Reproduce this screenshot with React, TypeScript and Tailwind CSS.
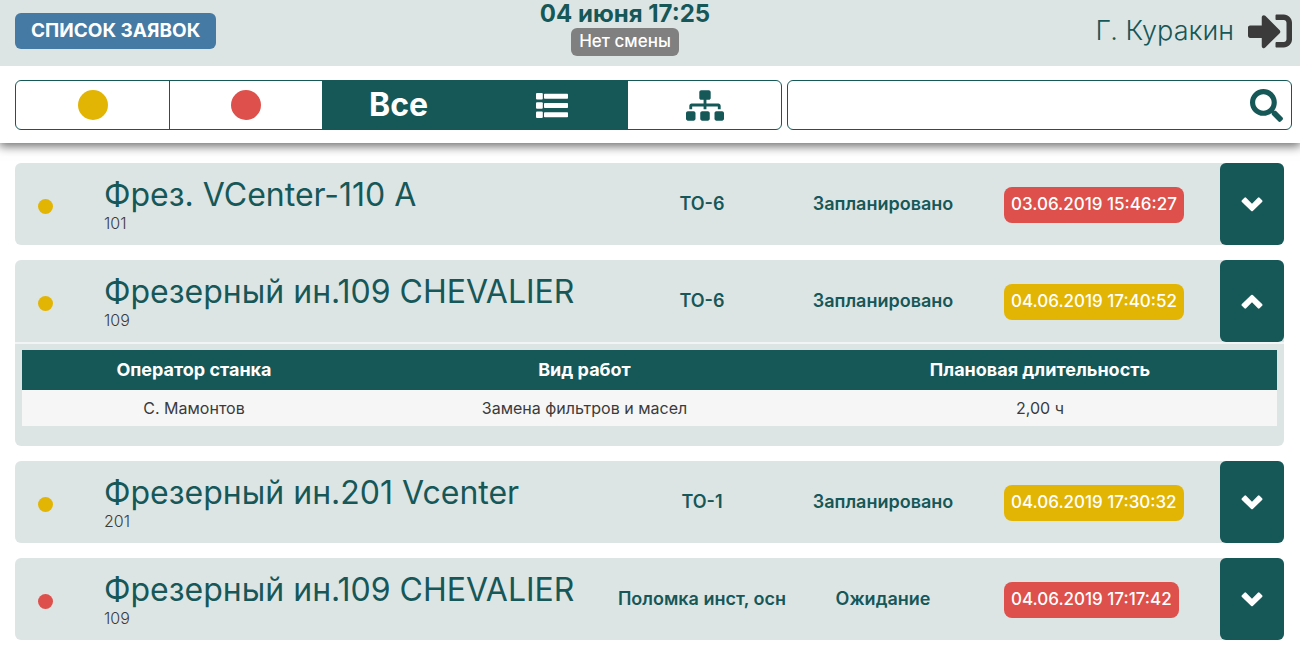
import { useState } from "react";
import { FaSearch, FaSignInAlt, FaSitemap } from "react-icons/fa";

interface Work {
  operator: string;
  kind: string;
  duration: string;
}

interface Request {
  id: number;
  level: "warning" | "danger";
  overdue: boolean;
  machine: string;
  number: string;
  type: string;
  status: string;
  date: string;
  works: Work[];
}

const requests: Request[] = [
  {
    id: 1,
    level: "warning",
    overdue: true,
    machine: "Фрез. VCenter-110 А",
    number: "101",
    type: "ТО-6",
    status: "Запланировано",
    date: "03.06.2019 15:46:27",
    works: [],
  },
  {
    id: 2,
    level: "warning",
    overdue: false,
    machine: "Фрезерный ин.109 CHEVALIER",
    number: "109",
    type: "ТО-6",
    status: "Запланировано",
    date: "04.06.2019 17:40:52",
    works: [{ operator: "С. Мамонтов", kind: "Замена фильтров и масел", duration: "2,00 ч" }],
  },
  {
    id: 3,
    level: "warning",
    overdue: false,
    machine: "Фрезерный ин.201 Vcenter",
    number: "201",
    type: "ТО-1",
    status: "Запланировано",
    date: "04.06.2019 17:30:32",
    works: [],
  },
  {
    id: 4,
    level: "danger",
    overdue: true,
    machine: "Фрезерный ин.109 CHEVALIER",
    number: "109",
    type: "Поломка инст, осн",
    status: "Ожидание",
    date: "04.06.2019 17:17:42",
    works: [],
  },
];

const levelColor = {
  warning: "bg-[#e2b505]",
  danger: "bg-[#dd504b]",
};

function ListIcon() {
  return (
    <svg viewBox="0 0 32 25" className="h-[25px] w-8" fill="currentColor" aria-hidden="true">
      {[0, 9.25, 18.5].map((y) => (
        <g key={y}>
          <rect x="0" y={y} width="6.8" height="6.5" rx="1" />
          <rect x="8" y={y + 0.7} width="24" height="5.1" rx="0.8" />
        </g>
      ))}
    </svg>
  );
}

function Chevron({ up }: { up: boolean }) {
  return (
    <svg viewBox="0 0 22 15" className="h-[15px] w-[22px]" fill="currentColor" aria-hidden="true">
      <path
        transform={up ? "rotate(180 11 7.5)" : undefined}
        d="M10.2 14 .9 4.9a1.2 1.2 0 0 1 0-1.7L3.4.8a1.2 1.2 0 0 1 1.7 0L11 6.7 16.9.8a1.2 1.2 0 0 1 1.7 0l2.5 2.4a1.2 1.2 0 0 1 0 1.7L11.8 14a1.2 1.2 0 0 1-1.6 0Z"
      />
    </svg>
  );
}

function Toolbar() {
  const cell = "flex items-center justify-center border-[#165758]";
  return (
    <div className="grid grid-cols-[767fr_505fr] gap-[5px] pt-3.5 pr-2 pb-[13px] pl-[15px]">
      <div className="grid h-[50px] grid-cols-5 overflow-hidden rounded-md border border-[#165758] text-[#165758]">
        <button type="button" aria-label="Жёлтые" className={cell}>
          <span className="size-[30px] rounded-full bg-[#e2b505]" />
        </button>
        <button type="button" aria-label="Красные" className={`${cell} border-l`}>
          <span className="size-[30px] rounded-full bg-[#dd504b]" />
        </button>
        <button type="button" className={`${cell} bg-[#165758] text-[32px] font-bold text-white`}>
          Все
        </button>
        <button type="button" aria-label="Список" className={`${cell} bg-[#165758] text-white`}>
          <ListIcon />
        </button>
        <button type="button" aria-label="Дерево" className={cell}>
          <FaSitemap className="h-[31px] w-[38px]" />
        </button>
      </div>
      <label className="flex h-[50px] items-center rounded-md border border-[#165758] pr-2 pl-3">
        <input type="text" aria-label="Поиск" className="min-w-0 flex-1 text-2xl text-[#165758] outline-none" />
        <FaSearch className="size-[33px] text-[#165758]" />
      </label>
    </div>
  );
}

function WorksTable({ works }: { works: Work[] }) {
  return (
    <div className="border-t-2 border-[#f2f5f5] px-[7px] pt-1.5 pb-5">
      <table className="w-full table-fixed text-center">
        <thead className="bg-[#165758] text-lg text-white">
          <tr className="h-10">
            <th className="w-[344px] font-bold">Оператор станка</th>
            <th className="font-bold">Вид работ</th>
            <th className="w-[474px] font-bold">Плановая длительность</th>
          </tr>
        </thead>
        <tbody className="bg-[#f6f6f6] text-base text-[#3b3b3b]">
          {works.map((work) => (
            <tr key={work.operator} className="h-9">
              <td>{work.operator}</td>
              <td>{work.kind}</td>
              <td>{work.duration}</td>
            </tr>
          ))}
        </tbody>
      </table>
    </div>
  );
}

function RequestCard({ request }: { request: Request }) {
  const [open, setOpen] = useState(request.works.length > 0);
  const badge = request.overdue ? levelColor.danger : levelColor.warning;

  return (
    <li className="rounded-md bg-[#dde5e4]">
      <div className="grid h-[82px] grid-cols-[89px_1fr_180px_182px_246px_64px] items-center text-[#165758]">
        <span className={`mt-1 ml-[23px] size-[15px] rounded-full ${levelColor[request.level]}`} />
        <div className="pt-0.5 whitespace-nowrap">
          <h2 className="text-[32px] leading-9">{request.machine}</h2>
          <p className="text-base leading-5 font-light text-[#3b3b3b]">{request.number}</p>
        </div>
        <p className="text-center text-lg font-semibold whitespace-nowrap">{request.type}</p>
        <p className="text-center text-lg font-semibold">{request.status}</p>
        <div className="flex pt-0.5 pl-[30px]">
          <span className={`flex h-9 items-center rounded-lg px-[7px] text-[17px] font-medium whitespace-nowrap text-white ${badge}`}>
            {request.date}
          </span>
        </div>
        <button
          type="button"
          aria-expanded={open}
          aria-label="Подробнее"
          onClick={() => setOpen(!open)}
          className="flex h-full items-center justify-center rounded-md bg-[#165758] text-white"
        >
          <Chevron up={open} />
        </button>
      </div>
      {open && <WorksTable works={request.works} />}
    </li>
  );
}

export default function App() {
  return (
    <div className="min-h-screen bg-white font-['Inter',sans-serif]">
      <header className="shadow-[0_2px_10px_1px_rgba(0,0,0,0.6)]">
        <div className="grid h-[66px] grid-cols-[450fr_320fr_507fr] bg-[#dde5e4] pr-2 pl-[15px] text-[#165758]">
          <div className="pt-[13px]">
            <button type="button" className="h-9 rounded-md bg-[#447aa3] px-4 text-[19px] font-bold whitespace-nowrap text-white">
              СПИСОК ЗАЯВОК
            </button>
          </div>
          <div className="flex flex-col items-center">
            <p className="text-2xl leading-7 font-bold">04 июня 17:25</p>
            <span className="flex h-7 items-center rounded-md bg-[#808080] px-2 text-[17px] font-medium text-white">Нет смены</span>
          </div>
          <div className="flex items-center justify-end gap-3.5 pb-1">
            <span className="text-[27px] font-light">Г. Куракин</span>
            <button type="button" aria-label="Выйти">
              <FaSignInAlt className="size-11 text-[#3b3b3b]" />
            </button>
          </div>
        </div>
        <Toolbar />
      </header>
      <ul className="flex flex-col gap-[15px] pt-5 pr-4 pb-5 pl-[15px]">
        {requests.map((request) => (
          <RequestCard key={request.id} request={request} />
        ))}
      </ul>
    </div>
  );
}
